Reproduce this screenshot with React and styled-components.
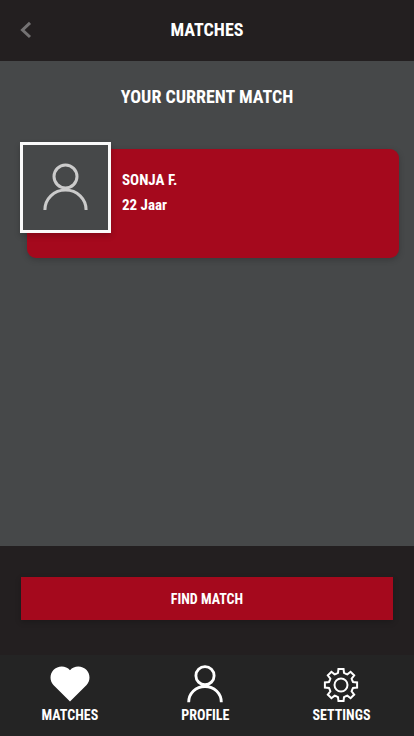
import React from "react";
import styled, { createGlobalStyle } from "styled-components";

const GlobalStyle = createGlobalStyle`
  *, *::before, *::after { box-sizing: border-box; }
  body {
    margin: 0;
    background: #464849;
    color: #fff;
    font-family: "Roboto Condensed", "Liberation Sans Narrow", "Liberation Sans", sans-serif;
    font-weight: 700;
  }
`;

const Screen = styled.div`
  display: flex;
  flex-direction: column;
  min-height: 100vh;
  background: #464849;
`;

const Header = styled.header`
  display: grid;
  grid-template-columns: 52px 1fr 52px;
  align-items: center;
  height: 61px;
  padding-bottom: 2px;
  background: #231f20;
`;

const BackButton = styled.button`
  display: flex;
  align-items: center;
  height: 40px;
  padding: 0 0 0 20px;
  border: 0;
  background: none;
  cursor: pointer;
`;

const Title = styled.h1`
  margin: 0;
  font-size: 18px;
  line-height: 24px;
  text-align: center;
`;

const Content = styled.main`
  flex: 1;
  padding: 24px 15px 24px 27px;
`;

const Heading = styled.h2`
  margin: 0 0 40px;
  padding-right: 12px;
  font-size: 18px;
  line-height: 24px;
  text-align: center;
`;

const MatchCard = styled.article`
  display: flex;
  gap: 11px;
  min-height: 109px;
  border-radius: 9px;
  background: #a5091d;
  box-shadow: 0 2px 6px rgba(0, 0, 0, 0.2);
`;

const Avatar = styled.div`
  display: grid;
  place-items: center;
  flex: none;
  width: 91px;
  height: 91px;
  margin: -7px 0 0 -7px;
  padding-bottom: 2px;
  border: 3px solid #fafafa;
  background: #464849;
  box-shadow: 0 3px 6px rgba(0, 0, 0, 0.2);
`;

const Details = styled.div`
  padding-top: 19px;
`;

const Detail = styled.p`
  margin: 0;
  font-size: 15px;
  line-height: 25px;
`;

const Actions = styled.section`
  padding: 31px 21px 35px;
  background: #231f20;
`;

const FindButton = styled.button`
  display: block;
  width: 100%;
  height: 43px;
  padding: 0;
  border: 0;
  background: #a5091d;
  color: #fff;
  font: inherit;
  font-size: 14px;
  cursor: pointer;
  box-shadow: 0 2px 6px rgba(0, 0, 0, 0.2);
`;

const TabBar = styled.nav`
  display: flex;
  justify-content: space-around;
  height: 81px;
  padding: 10px 2px 0 0;
  background: #242424;
`;

const Tab = styled.a`
  display: flex;
  flex-direction: column;
  align-items: center;
  gap: 2px;
  color: #fff;
  font-size: 14px;
  line-height: 20px;
  text-decoration: none;
`;

const TabIcon = styled.span`
  display: grid;
  place-items: center;
  height: 38px;
`;

function BackIcon() {
  return (
    <svg width="12" height="18" viewBox="0 0 12 18" fill="none" stroke="#747273" strokeWidth="3" aria-hidden="true">
      <path d="M10 1.800 2.500 9l7.500 7" />
    </svg>
  );
}

function PersonIcon({ color, width, height, stroke }) {
  return (
    <svg width={width} height={height} viewBox="0 0 45 48" fill="none" stroke={color} strokeWidth={stroke} aria-hidden="true">
      <circle cx="22.5" cy="13.5" r="11.5" />
      <path d="M1.900 47c0-11 9-19.900 20.600-19.900s20.600 8.900 20.600 19.900" />
    </svg>
  );
}

function HeartIcon() {
  return (
    <svg width="40" height="36" viewBox="0 0 40 36" fill="#fff" aria-hidden="true">
      <path d="M20 35.500 3.400 19C-.5 14.900-.4 8 3.400 4 7.800-.5 15.800-.8 20 4.300 24.200-.8 32.200-.5 36.600 4c3.800 4 3.900 10.900 0 15z" />
    </svg>
  );
}

const toothPath = (() => {
  const profile = [[-19, 12.2], [-14, 12.4], [-9, 16.3], [9, 16.3], [14, 12.4], [19, 12.2]];
  const points = [];
  for (let tooth = 0; tooth < 8; tooth += 1) {
    profile.forEach(([angle, radius]) => {
      const turn = ((tooth * 45 + angle) * Math.PI) / 180;
      points.push(`${(18 + radius * Math.sin(turn)).toFixed(2)} ${(18 - radius * Math.cos(turn)).toFixed(2)}`);
    });
  }
  return `M${points.join("L")}Z`;
})();

function GearIcon() {
  return (
    <svg width="36" height="38" viewBox="0 -2 36 38" fill="none" stroke="#fff" strokeWidth="2" aria-hidden="true">
      <path d={toothPath} />
      <circle cx="18" cy="18" r="6.500" />
    </svg>
  );
}

export default function App() {
  return (
    <Screen>
      <GlobalStyle />
      <Header>
        <BackButton type="button" aria-label="Back">
          <BackIcon />
        </BackButton>
        <Title>MATCHES</Title>
      </Header>
      <Content>
        <Heading>YOUR CURRENT MATCH</Heading>
        <MatchCard>
          <Avatar>
            <PersonIcon color="#cbcbcb" width={45} height={48} stroke={3} />
          </Avatar>
          <Details>
            <Detail>SONJA F.</Detail>
            <Detail>22 Jaar</Detail>
          </Details>
        </MatchCard>
      </Content>
      <Actions>
        <FindButton type="button">FIND MATCH</FindButton>
      </Actions>
      <TabBar>
        <Tab href="#matches">
          <TabIcon><HeartIcon /></TabIcon>
          MATCHES
        </Tab>
        <Tab href="#profile">
          <TabIcon><PersonIcon color="#fff" width={36} height={38} stroke={3.600} /></TabIcon>
          PROFILE
        </Tab>
        <Tab href="#settings">
          <TabIcon><GearIcon /></TabIcon>
          SETTINGS
        </Tab>
      </TabBar>
    </Screen>
  );
}
